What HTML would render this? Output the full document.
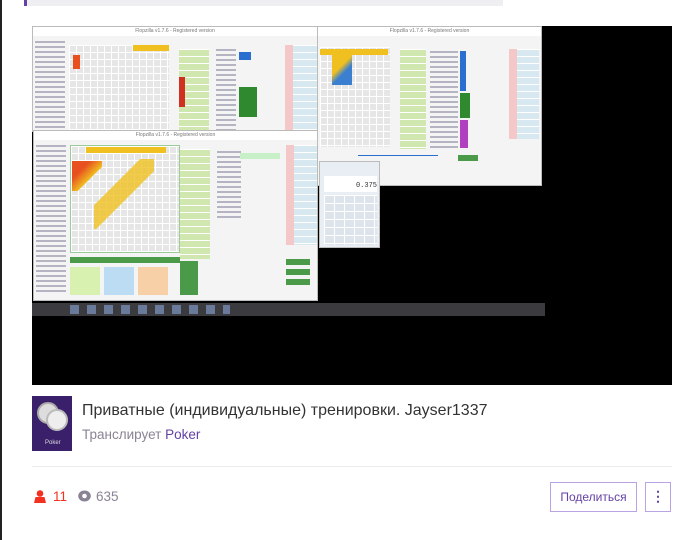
<!DOCTYPE html>
<html><head><meta charset="utf-8"><style>
*{margin:0;padding:0;box-sizing:border-box}
body{width:698px;height:540px;background:#fff;position:relative;overflow:hidden;font-family:"Liberation Sans",sans-serif}
.abs{position:absolute}
.win{position:absolute;background:#f4f4f4;border:1px solid #bbb;overflow:hidden}
.title{height:9px;background:#fff;font-size:5px;color:#777;text-align:center;line-height:9px}
.grid{position:absolute;background-color:#e6e6e6;background-image:linear-gradient(90deg,#fff 1px,transparent 1px),linear-gradient(#fff 1px,transparent 1px);background-size:7px 7px}
.col{position:absolute;background-image:linear-gradient(#fff 1px,transparent 1px);background-size:100% 7px}
.txt{position:absolute;background-image:linear-gradient(#8a8aa0 2px,transparent 2px);background-size:100% 5px;opacity:.6}
.y{position:absolute;width:7px;height:6px;background:#f0c020}
</style></head><body>
<div class="abs" style="left:0;top:0;width:2px;height:540px;background:#222"></div>
<div class="abs" style="left:24px;top:0;width:479px;height:6px;background:#efeff1"></div>
<div class="abs" style="left:24px;top:0;width:3px;height:6px;background:#6441a4"></div>

<div class="abs" style="left:32px;top:26px;width:640px;height:359px;background:#000"></div>

<!-- right window -->
<div class="win" style="left:317px;top:26px;width:225px;height:160px">
 <div class="title">Flopzilla v1.7.6 - Registered version</div>
 <div class="grid" style="left:2px;top:20px;width:70px;height:100px"></div>
 <div class="y" style="left:2px;top:22px;width:68px"></div>
 <div class="abs" style="left:14px;top:28px;width:20px;height:30px;background:linear-gradient(135deg,#f0c020 40%,#3a7fd0 60%)"></div>
 <div class="col" style="left:82px;top:22px;width:26px;height:100px;background-color:#d0e8b0"></div>
 <div class="txt" style="left:112px;top:24px;width:28px;height:100px"></div>
 <div class="abs" style="left:142px;top:24px;width:6px;height:40px;background:#2a6fd0"></div>
 <div class="abs" style="left:142px;top:66px;width:10px;height:25px;background:#2f8a2f"></div>
 <div class="abs" style="left:142px;top:93px;width:8px;height:28px;background:#b040c0"></div>
 <div class="col" style="left:191px;top:22px;width:30px;height:90px;background-color:#d8e8f0"></div>
 <div class="abs" style="left:191px;top:22px;width:8px;height:90px;background:#f4c8c8"></div>
 <div class="abs" style="left:140px;top:128px;width:20px;height:6px;background:#4a9a4a"></div>
 <div class="abs" style="left:40px;top:128px;width:80px;height:1px;background:#2a6fd0"></div>
</div>

<!-- top-left window -->
<div class="win" style="left:32px;top:26px;width:286px;height:106px">
 <div class="title">Flopzilla v1.7.6 - Registered version</div>
 <div class="txt" style="left:2px;top:14px;width:30px;height:90px"></div>
 <div class="grid" style="left:36px;top:18px;width:100px;height:88px"></div>
 <div class="y" style="left:100px;top:18px;width:36px"></div>
 <div class="abs" style="left:40px;top:28px;width:7px;height:14px;background:#e85020"></div>
 <div class="col" style="left:146px;top:22px;width:30px;height:84px;background-color:#d0e8b0"></div>
 <div class="abs" style="left:146px;top:50px;width:6px;height:30px;background:#d03020"></div>
 <div class="txt" style="left:183px;top:22px;width:20px;height:84px"></div>
 <div class="abs" style="left:206px;top:25px;width:12px;height:8px;background:#2a6fd0"></div>
 <div class="abs" style="left:206px;top:60px;width:18px;height:30px;background:#2f8a2f"></div>
 <div class="col" style="left:252px;top:18px;width:32px;height:88px;background-color:#d8e8f0"></div>
 <div class="abs" style="left:252px;top:18px;width:8px;height:88px;background:#f4c8c8"></div>
</div>

<!-- bottom window -->
<div class="win" style="left:33px;top:130px;width:285px;height:171px">
 <div class="title">Flopzilla v1.7.6 - Registered version</div>
 <div class="txt" style="left:2px;top:14px;width:30px;height:150px"></div>
 <div class="grid" style="left:36px;top:14px;width:110px;height:108px;border:1px solid #9c9"></div>
 <div class="y" style="left:52px;top:16px;width:80px"></div>
 <div class="abs" style="left:38px;top:30px;width:30px;height:30px;background:linear-gradient(135deg,#e85020 30%,#f0c020 60%,transparent 60%)"></div>
 <div class="abs" style="left:60px;top:28px;width:60px;height:70px;background:linear-gradient(135deg,transparent 35%,#f0c020 36%,#f0c020 55%,transparent 56%);opacity:.8"></div>
 <div class="abs" style="left:36px;top:126px;width:110px;height:6px;background:#4a9a4a"></div>
 <div class="abs" style="left:36px;top:136px;width:30px;height:28px;background:#d8f0b0"></div>
 <div class="abs" style="left:70px;top:136px;width:30px;height:28px;background:#bcdcf4"></div>
 <div class="abs" style="left:104px;top:136px;width:30px;height:28px;background:#f8d0a8"></div>
 <div class="col" style="left:146px;top:18px;width:30px;height:110px;background-color:#d0e8b0"></div>
 <div class="txt" style="left:183px;top:20px;width:24px;height:70px"></div>
 <div class="abs" style="left:206px;top:22px;width:40px;height:6px;background:#c8f0c8"></div>
 <div class="col" style="left:252px;top:14px;width:32px;height:100px;background-color:#d8e8f0"></div>
 <div class="abs" style="left:252px;top:14px;width:8px;height:100px;background:#f4c8c8"></div>
 <div class="abs" style="left:146px;top:130px;width:18px;height:34px;background:#4a9a4a"></div>
 <div class="abs" style="left:252px;top:128px;width:24px;height:30px;background:repeating-linear-gradient(#4a9a4a 0 6px,transparent 6px 10px)"></div>
</div>

<!-- calculator -->
<div class="win" style="left:319px;top:161px;width:61px;height:87px;background:#e8eef4">
 <div class="abs" style="left:4px;top:14px;width:53px;height:16px;background:#fff;font-size:7px;text-align:right;line-height:20px;color:#333;font-family:'Liberation Mono',monospace">0.375</div>
 <div class="grid" style="left:4px;top:33px;width:53px;height:50px;background-color:#dde4ec;background-size:10px 8px"></div>
</div>

<!-- taskbar -->
<div class="abs" style="left:32px;top:303px;width:513px;height:13px;background:#3b3b3f"></div>
<div class="abs" style="left:70px;top:305px;width:160px;height:9px;background:repeating-linear-gradient(90deg,#6a7a9a 0 9px,transparent 9px 17px)"></div>

<!-- info -->
<div class="abs" style="left:32px;top:396px;width:40px;height:55px;background:#3a1f6a"></div>
<div class="abs" style="left:37px;top:402px;width:22px;height:22px;border-radius:50%;background:#ddd;border:2px solid #aaa"></div>
<div class="abs" style="left:46px;top:409px;width:22px;height:22px;border-radius:50%;background:#eee;border:2px solid #bbb"></div>
<div class="abs" style="left:45px;top:440px;font-size:6px;color:#ddd">Poker</div>
<div class="abs" style="left:82px;top:402px;font-size:16px;color:#333">Приватные (индивидуальные) тренировки. Jayser1337</div>
<div class="abs" style="left:82px;top:427px;font-size:13.5px;color:#898395">Транслирует <span style="color:#6441a4">Poker</span></div>
<div class="abs" style="left:32px;top:466px;width:640px;height:1px;background:#ebebed"></div>
<svg class="abs" style="left:34px;top:490px" width="12" height="13" viewBox="0 0 12 13"><circle cx="6" cy="3.5" r="3.3" fill="#f43021"/><path d="M0 13 L1.5 7 H10.5 L12 13Z" fill="#f43021"/></svg>
<div class="abs" style="left:53px;top:489px;font-size:13.5px;color:#f43021">11</div>
<svg class="abs" style="left:78px;top:490px" width="13" height="12" viewBox="0 0 13 12"><ellipse cx="6.5" cy="6" rx="6.3" ry="5.5" fill="#898395"/><circle cx="6.5" cy="6" r="2.3" fill="#fff"/></svg>
<div class="abs" style="left:96px;top:489px;font-size:13.5px;color:#898395">635</div>
<div class="abs" style="left:550px;top:482px;width:87px;height:30px;border:1px solid #b9a3e3;font-size:12px;color:#6441a4;text-align:center;line-height:28px">Поделиться</div>
<div class="abs" style="left:645px;top:482px;width:26px;height:30px;border:1px solid #b9a3e3;color:#6441a4;font-size:14px;font-weight:bold;text-align:center;line-height:27px">⋮</div>
</body></html>
